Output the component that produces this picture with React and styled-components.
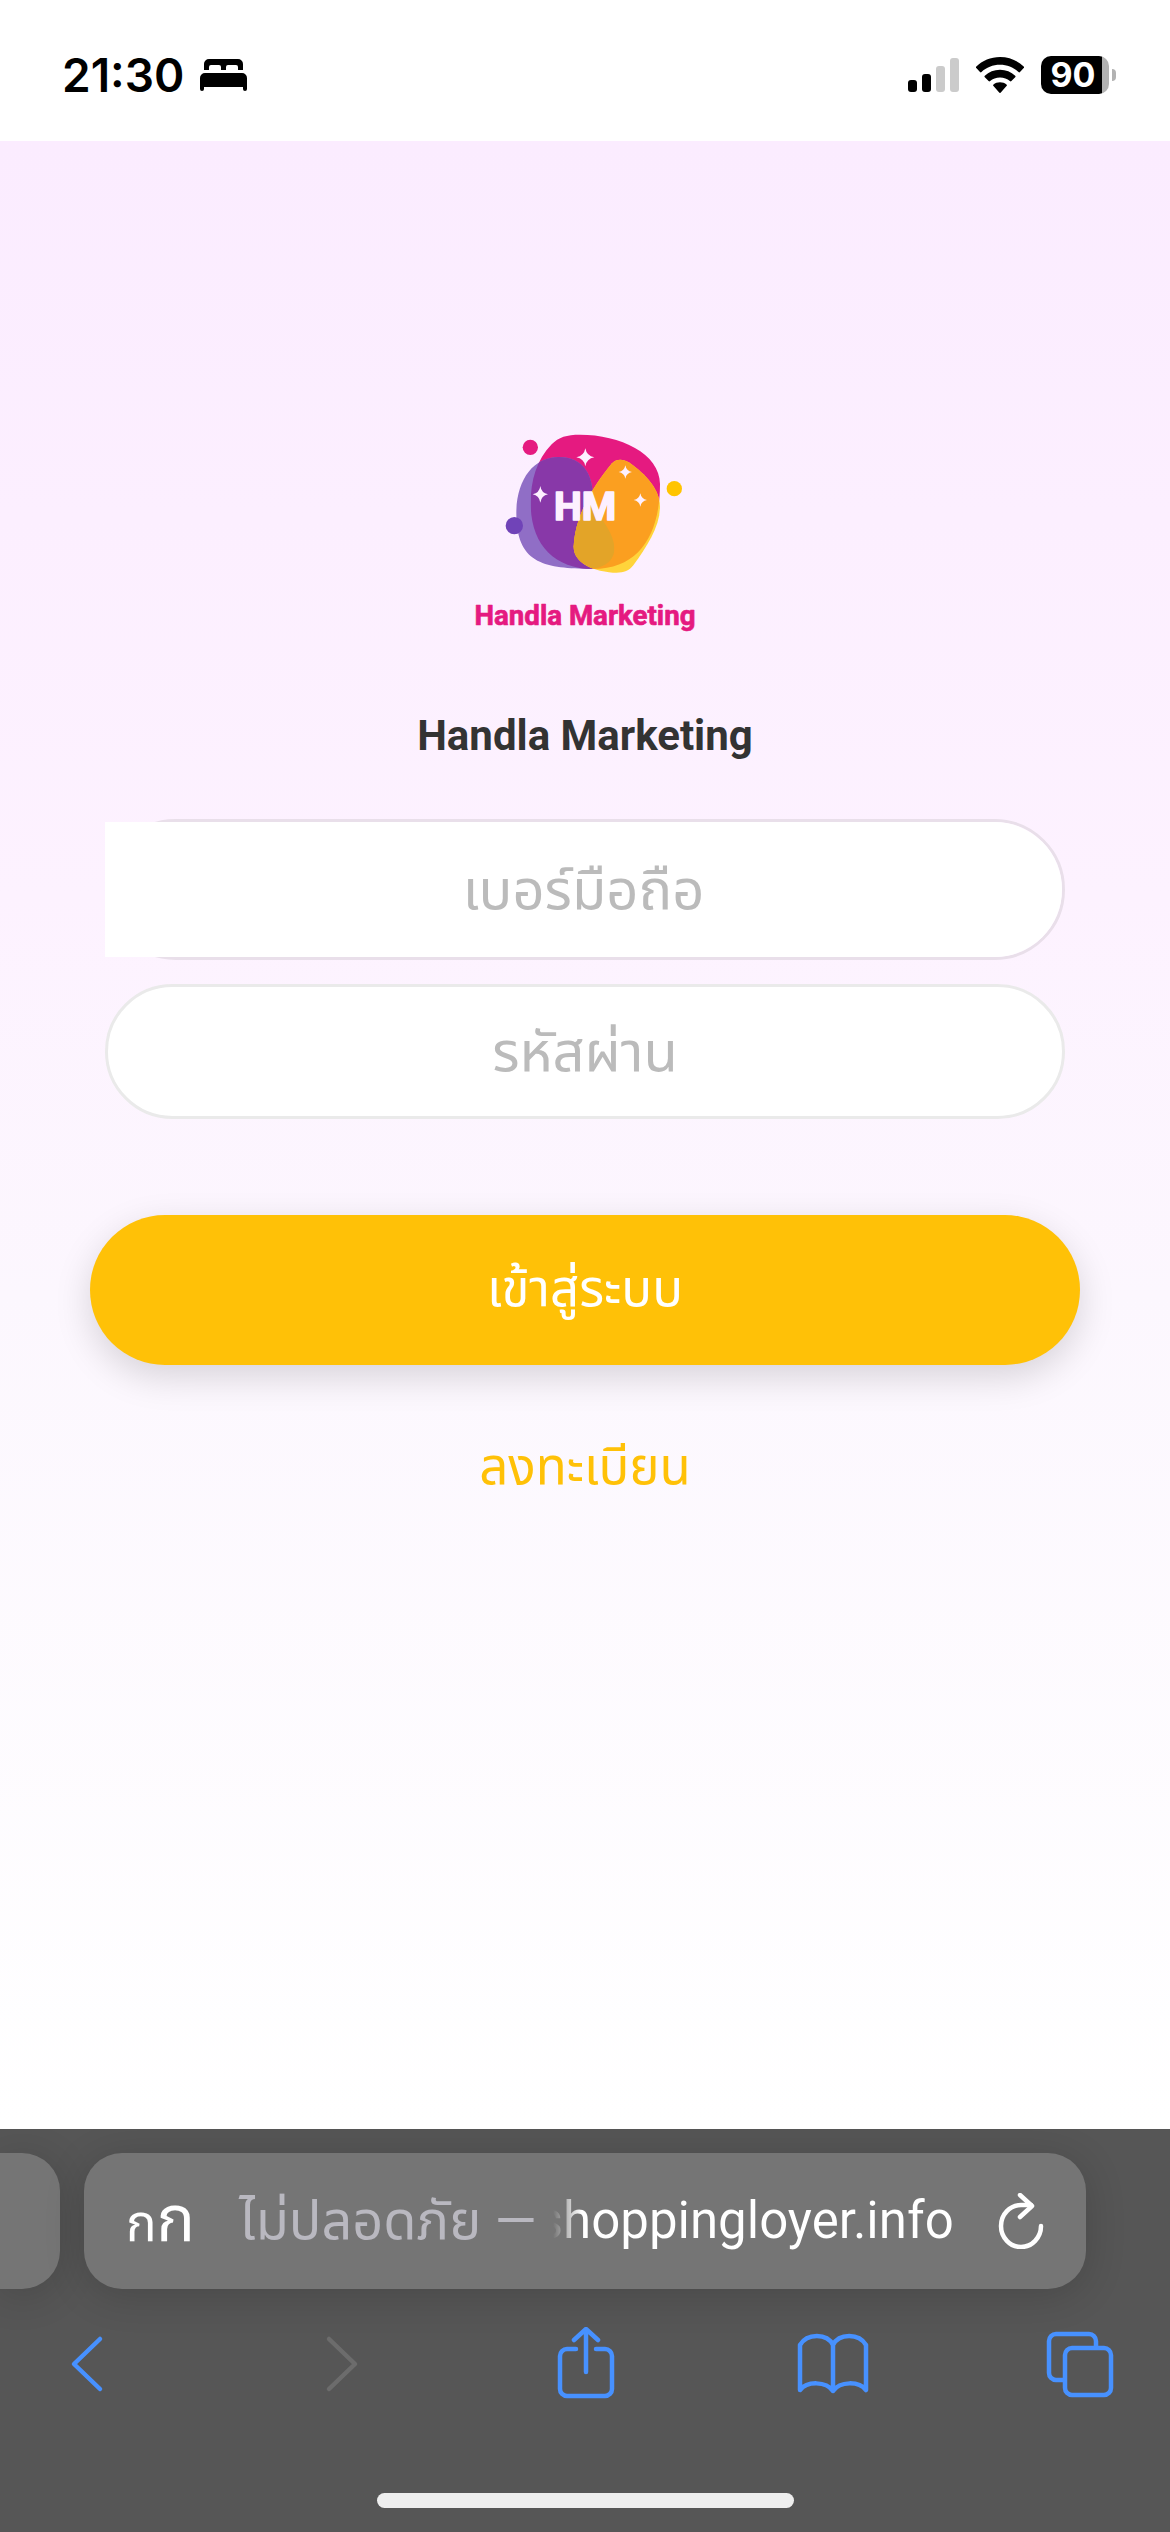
import styled, { createGlobalStyle } from "styled-components";

function BedIcon() {
  return (
    <svg width="47" height="32" viewBox="0 0 47 32" aria-hidden="true">
      <path d="M4 11V5a5 5 0 0 1 5-5h29a5 5 0 0 1 5 5v6h-5V8a2 2 0 0 0-2-2H28a2 2 0 0 0-2 2v3h-5V8a2 2 0 0 0-2-2h-8a2 2 0 0 0-2 2v3z" />
      <path d="M0 19a5 5 0 0 1 5-5h37a5 5 0 0 1 5 5v11a2 2 0 0 1-4 0v-2H4v2a2 2 0 0 1-4 0z" />
    </svg>
  );
}

function SignalIcon() {
  return (
    <svg width="51" height="34" viewBox="0 0 51 34" aria-hidden="true">
      <rect x="0" y="22" width="9" height="12" rx="3" />
      <rect x="14" y="16" width="9" height="18" rx="3" />
      <rect x="28" y="8" width="9" height="26" rx="3" fill="#cbcbcb" />
      <rect x="42" y="0" width="9" height="34" rx="3" fill="#cbcbcb" />
    </svg>
  );
}

function WifiIcon() {
  return (
    <svg width="48" height="36" viewBox="0 0 48 36" aria-hidden="true">
      <path d="M24 0C14.700 0 6.300 3.600 .3 9.600a1 1 0 0 0 0 1.500L4 15a1 1 0 0 0 1.500 0C10.300 10.500 16.800 7.800 24 7.800s13.700 2.700 18.500 7.200a1 1 0 0 0 1.500 0l3.700-3.900a1 1 0 0 0 0-1.500C41.700 3.600 33.300 0 24 0z" />
      <path d="M24 12.800c-5.900 0-11.200 2.200-15.200 5.900a1 1 0 0 0 0 1.500l3.800 3.800a1 1 0 0 0 1.500 0c2.600-2.300 6.100-3.600 9.900-3.600s7.300 1.300 9.900 3.600a1 1 0 0 0 1.500 0l3.800-3.800a1 1 0 0 0 0-1.500C35.200 15 29.900 12.800 24 12.800z" />
      <path d="M24 25.200c-2.500 0-4.800.8-6.500 2.200a1 1 0 0 0 0 1.500l5.700 6.600a1 1 0 0 0 1.600 0l5.700-6.600a1 1 0 0 0 0-1.500c-1.700-1.400-4-2.200-6.500-2.200z" />
    </svg>
  );
}

function Logo() {
  return (
    <svg
      width="300"
      height="260"
      viewBox="-15 0 900 780"
      role="img"
      aria-label="Handla Marketing logo"
    >
      <defs>
        <path
          id="pink"
          d="M420 104C540 104 660 160 660 252C660 400 600 507 460 507C340 507 272 430 272 310C272 240 290 180 335 133C356 111 380 104 420 104Z"
        />
        <path
          id="violet"
          d="M356 171C430 171 455 225 458 275C462 350 523 385 523 446C523 490 480 507 440 507C310 503 229 490 229 340C229 240 280 171 356 171Z"
        />
        <path
          id="amber"
          d="M516 190C530 175 550 177 566 187C600 210 660 260 660 320C660 380 620 440 580 496C560 522 530 522 480 512C440 502 401 480 401 440C405 340 470 245 516 190Z"
        />
        <clipPath id="clipPink">
          <use href="#pink" />
        </clipPath>
        <clipPath id="clipViolet">
          <use href="#violet" />
        </clipPath>
      </defs>
      <use href="#pink" fill="#e51a80" />
      <use href="#violet" fill="#906ec6" />
      <use href="#violet" fill="#8838a8" clipPath="url(#clipPink)" />
      <use href="#amber" fill="#ffd43b" />
      <use href="#amber" fill="#fb9f20" clipPath="url(#clipPink)" />
      <g clipPath="url(#clipPink)">
        <use href="#amber" fill="#e3a428" clipPath="url(#clipViolet)" />
      </g>
      <circle cx="271" cy="142" r="23" fill="#e51a80" />
      <circle cx="223" cy="377" r="26" fill="#7043b8" />
      <circle cx="703" cy="266" r="23" fill="#ffc400" />
      <g fill="#fdf0ff">
        <path d="M436 145q4 23 27 27q-23 4-27 27q-4-23-27-27q23-4 27-27z" />
        <path d="M301 258q3 21 23 25q-20 4-23 25q-3-21-23-25q20-4 23-25z" />
        <path d="M556 196q3 17 20 20q-17 3-20 20q-3-17-20-20q17-3 20-20z" />
        <path d="M601 280q3 17 20 20q-17 3-20 20q-3-17-20-20q17-3 20-20z" />
        <LogoText x="435" y="360" fontSize="118" stroke="#fdf0ff" strokeWidth="5">
          HM
        </LogoText>
      </g>
      <LogoText x="435" y="675" fontSize="83" fill="#e51a80" stroke="#e51a80" strokeWidth="2">
        Handla Marketing
      </LogoText>
    </svg>
  );
}

function ReloadIcon() {
  return (
    <Stroked width="46" height="56" viewBox="0 0 46 56" aria-hidden="true">
      <path d="M43 33a20 21 0 1 1-20-21h10" />
      <path d="M22 2l12 11-12 11" />
    </Stroked>
  );
}

const toolbarItems = [
  {
    label: "ย้อนกลับ",
    paths: ["M51 12L25 37L51 62"],
  },
  {
    label: "ไปข้างหน้า",
    disabled: true,
    paths: ["M31 12L57 37L31 62"],
  },
  {
    label: "แชร์",
    paths: [
      "M30 22H21a7 7 0 0 0-7 7v33a7 7 0 0 0 7 7h38a7 7 0 0 0 7-7V29a7 7 0 0 0-7-7H50",
      "M40 45V3M28 13L40 2L52 13",
    ],
  },
  {
    label: "บุ๊กมาร์ก",
    paths: [
      "M38 18C32 6 12 6 5 18V63C12 54 31 54 38 64C45 54 64 54 71 63V18C64 6 44 6 38 18V64",
    ],
  },
  {
    label: "แท็บ",
    paths: [
      "M20 53H13a7 7 0 0 1-7-7V14a7 7 0 0 1 7-7h33a7 7 0 0 1 7 7v5",
      "M29 21h32a7 7 0 0 1 7 7v33a7 7 0 0 1-7 7H29a7 7 0 0 1-7-7V28a7 7 0 0 1 7-7z",
    ],
  },
];

function App() {
  return (
    <Screen>
      <GlobalStyle />
      <StatusBar>
        <StatusGroup $gap={16}>
          <Time>21:30</Time>
          <BedIcon />
        </StatusGroup>
        <StatusGroup $gap={17}>
          <SignalIcon />
          <WifiIcon />
          <Battery>
            <BatteryBody>90</BatteryBody>
            <BatteryTip />
          </Battery>
        </StatusGroup>
      </StatusBar>

      <Main>
        <Logo />
        <Title>Handla Marketing</Title>
        <Form onSubmit={(e) => e.preventDefault()}>
          <PhoneGroup>
            <PhoneInput type="tel" aria-label="เบอร์มือถือ" placeholder="เบอร์มือถือ" />
          </PhoneGroup>
          <PasswordInput type="password" aria-label="รหัสผ่าน" placeholder="รหัสผ่าน" />
          <LoginButton type="submit">เข้าสู่ระบบ</LoginButton>
        </Form>
        <RegisterLink href="#register">ลงทะเบียน</RegisterLink>
      </Main>

      <Browser>
        <TabStrip>
          <PreviousTab />
          <AddressBar>
            <PageSettings aria-label="การตั้งค่าหน้า">
              ก<BigLetter>ก</BigLetter>
            </PageSettings>
            <Address>
              <Insecure>ไม่ปลอดภัย —</Insecure>
              <Host>shoppingloyer.info</Host>
            </Address>
            <IconButton aria-label="โหลดซ้ำ" $color="#fff">
              <ReloadIcon />
            </IconButton>
          </AddressBar>
        </TabStrip>
        <Toolbar>
          {toolbarItems.map((item) => (
            <IconButton
              key={item.label}
              aria-label={item.label}
              disabled={item.disabled}
              $color={item.disabled ? "#6c6c6c" : "#4791ff"}
            >
              <Stroked width="74" height="74" viewBox="0 0 74 74">
                {item.paths.map((d) => (
                  <path key={d} d={d} />
                ))}
              </Stroked>
            </IconButton>
          ))}
        </Toolbar>
        <HomeIndicator />
      </Browser>
    </Screen>
  );
}

const GlobalStyle = createGlobalStyle`
  * {
    box-sizing: border-box;
  }

  body {
    margin: 0;
    font-family: Roboto, "Noto Sans Thai", "Noto Sans", sans-serif;
  }

  svg {
    display: block;
    flex-shrink: 0;
  }

  button {
    padding: 0;
    border: none;
    background: none;
    font-family: inherit;
  }
`;

const Screen = styled.div`
  min-height: 100vh;
  display: flex;
  flex-direction: column;
  background: #fff;
`;

const StatusBar = styled.header`
  height: 141px;
  padding: 8px 54px 0 62px;
  display: flex;
  align-items: center;
  justify-content: space-between;
`;

const StatusGroup = styled.div`
  display: flex;
  align-items: center;
  gap: ${({ $gap }) => $gap}px;
`;

const Time = styled.span`
  font-family: Inter, sans-serif;
  font-size: 46px;
  font-weight: 600;
  line-height: 48px;
`;

const Battery = styled.div`
  display: flex;
  align-items: center;
  gap: 3px;
`;

const BatteryBody = styled.span`
  width: 68px;
  height: 38px;
  padding-right: 4px;
  border-radius: 10px;
  background: linear-gradient(to right, #000 61px, #b2b2b2 61px);
  color: #fff;
  font-family: Inter, sans-serif;
  font-size: 34px;
  font-weight: 700;
  line-height: 38px;
  text-align: center;
`;

const BatteryTip = styled.span`
  width: 4px;
  height: 12px;
  border-radius: 0 6px 6px 0;
  background: #b2b2b2;
`;

const Main = styled.main`
  flex: 1;
  padding: 259px 90px 0;
  display: flex;
  flex-direction: column;
  align-items: center;
  background: linear-gradient(#fbecff, #fdf2ff 38%, #fcf7fe 58%, #fff);
`;

const LogoText = styled.text`
  font-family: Roboto, sans-serif;
  font-weight: 700;
  text-anchor: middle;
  stroke-linejoin: round;
`;

const Title = styled.h1`
  margin: 51px 0 58px;
  color: #333;
  font-size: 42px;
  font-weight: 700;
  line-height: 50px;
`;

const Form = styled.form`
  width: 100%;
  display: flex;
  flex-direction: column;
`;

const PhoneGroup = styled.div`
  margin: 0 15px 24px;
  display: flex;
  border: 3px solid #e9dfea;
  border-radius: 72px;
`;

const Input = styled.input`
  min-width: 0;
  height: 135px;
  padding: 0 60px;
  border: none;
  background: #fff;
  color: #333;
  font-family: inherit;
  font-size: 56px;
  text-align: center;
  outline: none;

  &::placeholder {
    color: #bbb;
    opacity: 1;
  }
`;

const PhoneInput = styled(Input)`
  flex: 1;
  margin-left: -3px;
  border-radius: 0 68px 68px 0;
`;

const PasswordInput = styled(Input)`
  margin: 0 15px;
  border: 3px solid #eaeaea;
  border-radius: 68px;
`;

const LoginButton = styled.button`
  height: 150px;
  margin-top: 96px;
  && {
    border-radius: 75px;
    background: #ffc107;
  }
  box-shadow: 0 12px 36px rgba(0, 0, 0, 0.15);
  color: #fff;
  font-size: 51px;
`;

const RegisterLink = styled.a`
  margin-top: 72px;
  color: #ffc107;
  font-size: 51px;
  line-height: 60px;
  text-decoration: none;
`;

const Browser = styled.footer`
  padding-top: 24px;
  display: flex;
  flex-direction: column;
  overflow: hidden;
  background: #565656;
`;

const TabStrip = styled.div`
  padding-right: 84px;
  display: flex;
  gap: 24px;
`;

const PreviousTab = styled.div`
  width: 60px;
  border-radius: 0 38px 38px 0;
  background: #757575;
  box-shadow: 0 6px 40px rgba(0, 0, 0, 0.16);
`;

const AddressBar = styled.div`
  flex: 1;
  min-width: 0;
  height: 136px;
  padding: 0 42px;
  display: flex;
  align-items: center;
  justify-content: space-between;
  border-radius: 38px;
  background: #757575;
  box-shadow: 0 6px 40px rgba(0, 0, 0, 0.16);
`;

const PageSettings = styled.button`
  color: #fff;
  && {
    font-size: 51px;
  }
`;

const BigLetter = styled.span`
  font-size: 64px;
`;

const Address = styled.div`
  display: flex;
  align-items: center;
  line-height: 64px;
  white-space: nowrap;
`;

const Insecure = styled.span`
  color: #b9b8c0;
  font-size: 54px;
`;

const Host = styled.span`
  font-family: Roboto, sans-serif;
  font-size: 51px;
  color: transparent;
  background: linear-gradient(to right, transparent 16px, #fff 44px);
  background-clip: text;
`;

const IconButton = styled.button`
  color: ${({ $color }) => $color};
`;

const Stroked = styled.svg`
  fill: none;
  stroke: currentColor;
  stroke-width: 4.5;
  stroke-linecap: round;
  stroke-linejoin: round;
`;

const Toolbar = styled.nav`
  padding: 38px 53px 92px 49px;
  display: flex;
  justify-content: space-between;
`;

const HomeIndicator = styled.div`
  width: 417px;
  height: 15px;
  margin: 0 auto 24px;
  border-radius: 8px;
  background: #eee;
`;

export default App;
